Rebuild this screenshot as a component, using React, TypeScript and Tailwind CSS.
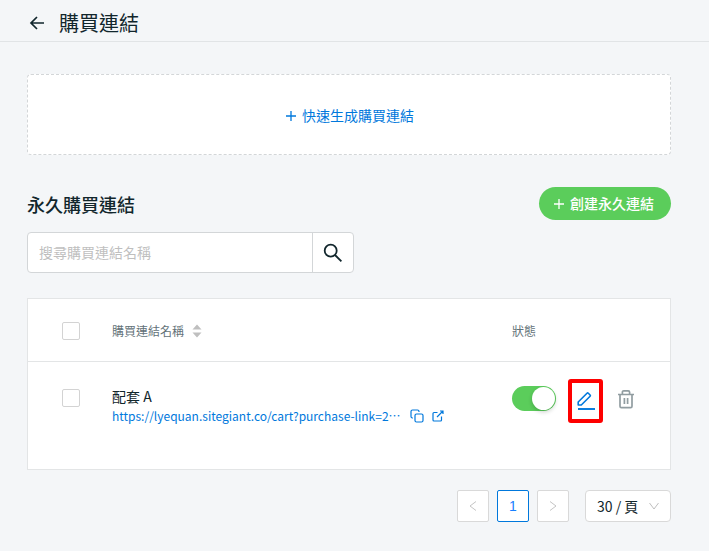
import React, { useState } from 'react'

type IconProps = { className?: string }

const PlusIcon: React.FC<IconProps> = ({ className }) => (
  <svg viewBox="0 0 10 10" className={className} fill="none" stroke="currentColor" strokeWidth="1.3" aria-hidden="true">
    <path d="M5 0v10M0 5h10" />
  </svg>
)

const ChevronIcon: React.FC<IconProps> = ({ className }) => (
  <svg viewBox="0 0 12 12" className={className} fill="none" stroke="currentColor" strokeWidth="1" aria-hidden="true">
    <path d="M9 1.500 3 6l6 4.500" />
  </svg>
)

const EditIcon: React.FC<IconProps> = ({ className }) => (
  <svg viewBox="0 0 20 20" className={className} fill="none" stroke="currentColor" strokeWidth="1.6" strokeLinejoin="round" aria-hidden="true">
    <path d="M2.200 14v-3L11 2.200c.4-.4.900-.4 1.300 0l1.800 1.800c.4.4.4.900 0 1.300L5.300 14H2.200z" />
    <path d="M2 18h17" strokeWidth="1.9" />
  </svg>
)

const TrashIcon: React.FC<IconProps> = ({ className }) => (
  <svg viewBox="0 0 20 20" className={className} fill="none" stroke="currentColor" strokeWidth="1.7" aria-hidden="true">
    <path d="M2 5.500h16M6.400 5.300V3.200c0-.8.600-1.400 1.400-1.400h4.400c.8 0 1.400.6 1.400 1.400v2.100M4 5.500v11.800c0 .8.600 1.400 1.400 1.400h9.200c.8 0 1.400-.6 1.400-1.400V5.500M8.400 9v6M11.600 9v6" />
  </svg>
)

const Toggle: React.FC<{ label: string }> = ({ label }) => {
  const [on, setOn] = useState(true)

  return (
    <button
      type="button"
      role="switch"
      aria-checked={on}
      aria-label={label}
      onClick={() => setOn(!on)}
      className={`flex h-[25px] w-11 items-center rounded-full px-px ${on ? 'justify-end bg-[#5bcd5b]' : 'justify-start bg-[#bfbfbf]'}`}
    >
      <span className="size-[23px] rounded-full bg-white shadow-[0_2px_4px_rgba(0,35,11,0.2)]" />
    </button>
  )
}

const links = [
  { id: 1, name: '配套 A', url: 'https://lyequan.sitegiant.co/cart?purchase-link=2847163' },
]

const shorten = (url: string, max = 49) => (url.length > max ? `${url.slice(0, max)}⋯` : url)

const checkboxClass = 'block size-[18px] appearance-none rounded-[2px] border border-[#d3d3d3] bg-white checked:bg-[#0078dc]'

export default function App() {
  const [search, setSearch] = useState('')

  return (
    <div lang="zh-Hant" className="min-h-screen bg-[#f4f6f8] font-['Noto_Sans_CJK_TC','Noto_Sans',sans-serif] text-[#11262c]">
      <header className="flex h-[42px] items-center gap-3.5 border-b border-[#e1e4e6] pt-1 pl-[29px]">
        <button type="button" aria-label="返回">
          <svg viewBox="0 0 16 16" className="size-4" fill="none" stroke="currentColor" strokeWidth="1.7" aria-hidden="true">
            <path d="M15 8H2M8 2 2 8l6 6" />
          </svg>
        </button>
        <h1 className="text-[20px] leading-7">購買連結</h1>
      </header>

      <main className="pt-8 pr-[38px] pb-7 pl-[27px]">
        <button
          type="button"
          className="flex h-[81px] w-full items-center justify-center gap-1.5 rounded-[4px] border border-dashed border-[#d3d6d8] bg-white pt-0.5 pl-0.5 text-[14px] text-[#0078dc]"
        >
          <PlusIcon className="size-2.5" />
          快速生成購買連結
        </button>

        <div className="mt-8 flex items-center justify-between">
          <h2 className="text-[18px] leading-7 font-medium">永久購買連結</h2>
          <button
            type="button"
            className="flex h-[33px] items-center gap-1.5 rounded-full bg-[#5bcd5b] pr-[17px] pl-[15px] text-[14px] font-medium text-white"
          >
            <PlusIcon className="size-2.5" />
            創建永久連結
          </button>
        </div>

        <form
          className="mt-3 flex h-[41px] max-w-[327px] rounded-[4px] border border-[#d3d6d8] bg-white"
          onSubmit={(e) => e.preventDefault()}
        >
          <input
            type="text"
            aria-label="搜尋購買連結名稱"
            placeholder="搜尋購買連結名稱"
            value={search}
            onChange={(e) => setSearch(e.target.value)}
            className="min-w-0 flex-1 px-[11px] text-[14px] outline-none placeholder:text-[#bfbfbf]"
          />
          <button type="submit" aria-label="搜尋" className="flex w-[41px] items-center justify-center border-l border-[#d3d6d8]">
            <svg viewBox="0 0 20 20" className="size-5" fill="none" stroke="currentColor" strokeWidth="1.8" aria-hidden="true">
              <circle cx="7.7" cy="7.7" r="6" />
              <path d="m12 12 6.400 6.400" />
            </svg>
          </button>
        </form>

        <div className="mt-[25px] border border-[#e3e5e6] bg-white">
          <table className="w-full table-fixed border-separate border-spacing-0 text-left">
            <thead>
              <tr className="h-[63px] text-[12px] text-[#637278]">
                <th className="w-[84px] border-b border-[#e3e5e6] pt-0.5 pl-[34px]">
                  <input type="checkbox" aria-label="全選" className={checkboxClass} />
                </th>
                <th className="border-b border-[#e3e5e6] pt-0.5 font-normal">
                  <button type="button" className="flex items-center gap-2">
                    購買連結名稱
                    <svg viewBox="0 0 10 14" className="h-3.5 w-2.5" fill="#bfbfbf" aria-hidden="true">
                      <path d="M5 .5 9.500 5.500h-9zM5 13.500.5 8.500h9z" />
                    </svg>
                  </button>
                </th>
                <th className="w-[158px] border-b border-[#e3e5e6] pt-0.5 font-normal">狀態</th>
              </tr>
            </thead>
            <tbody>
              {links.map((link) => (
                <tr key={link.id} className="h-[107px] align-top">
                  <td className="pt-[27px] pl-[34px]">
                    <input type="checkbox" aria-label={link.name} className={checkboxClass} />
                  </td>
                  <td className="pt-6">
                    <div className="text-[14px] leading-5">{link.name}</div>
                    <div className="flex items-center text-[12px] leading-5 text-[#0078dc]">
                      <a href={link.url} className="min-w-[298px]">
                        {shorten(link.url)}
                      </a>
                      <button type="button" aria-label="複製連結">
                        <svg viewBox="0 0 14 14" className="size-3.5" fill="none" stroke="currentColor" strokeWidth="1.2" aria-hidden="true">
                          <rect x="5" y="5" width="8" height="8" rx="1.500" />
                          <path d="M3 9H2.500A1.500 1.500 0 0 1 1 7.500v-5A1.500 1.500 0 0 1 2.500 1h5A1.500 1.500 0 0 1 9 2.500V3" />
                        </svg>
                      </button>
                      <a href={link.url} target="_blank" rel="noreferrer" aria-label="開啟連結" className="ml-2">
                        <svg viewBox="0 0 12 12" className="size-3" fill="none" stroke="currentColor" strokeWidth="1.2" aria-hidden="true">
                          <path d="M5.500 2.500H2c-.6 0-1 .4-1 1V10c0 .6.400 1 1 1h6.500c.6 0 1-.4 1-1V6.500M8 1h3v3M11 1 5 7" />
                        </svg>
                      </a>
                    </div>
                  </td>
                  <td className="pt-6">
                    <div className="flex items-center">
                      <Toggle label="狀態" />
                      <button type="button" aria-label="編輯" className="relative mt-1 ml-5 text-[#0078dc]">
                        <EditIcon className="size-5" />
                        <span className="absolute -top-3 -right-[7px] -bottom-3 -left-2 rounded-[3px] border-4 border-[#fe0000]" />
                      </button>
                      <button type="button" aria-label="刪除" className="ml-5 text-[#919da1]">
                        <TrashIcon className="size-5" />
                      </button>
                    </div>
                  </td>
                </tr>
              ))}
            </tbody>
          </table>
        </div>

        <nav aria-label="分頁" className="mt-5 flex justify-end gap-2">
          <button type="button" disabled aria-label="上一頁" className="flex size-8 items-center justify-center rounded-[2px] border border-[#d9d9d9] bg-white text-[#c4c4c4]">
            <ChevronIcon className="size-3" />
          </button>
          <button type="button" aria-current="page" className="size-8 rounded-[2px] border border-[#0078dc] bg-white font-['Liberation_Sans',sans-serif] text-[14px] text-[#1880ff]">
            1
          </button>
          <button type="button" disabled aria-label="下一頁" className="flex size-8 items-center justify-center rounded-[2px] border border-[#d9d9d9] bg-white text-[#c4c4c4]">
            <ChevronIcon className="size-3 rotate-180" />
          </button>
          <div className="relative ml-2">
            <select
              aria-label="每頁筆數"
              defaultValue="30"
              className="h-8 w-[86px] appearance-none rounded-[4px] border border-[#d9d9d9] bg-white pl-[11px] text-[14px]"
            >
              <option value="30">30 / 頁</option>
              <option value="50">50 / 頁</option>
              <option value="100">100 / 頁</option>
            </select>
            <ChevronIcon className="pointer-events-none absolute top-2.5 right-[11px] size-3 -rotate-90 text-[#bfbfbf]" />
          </div>
        </nav>
      </main>
    </div>
  )
}
